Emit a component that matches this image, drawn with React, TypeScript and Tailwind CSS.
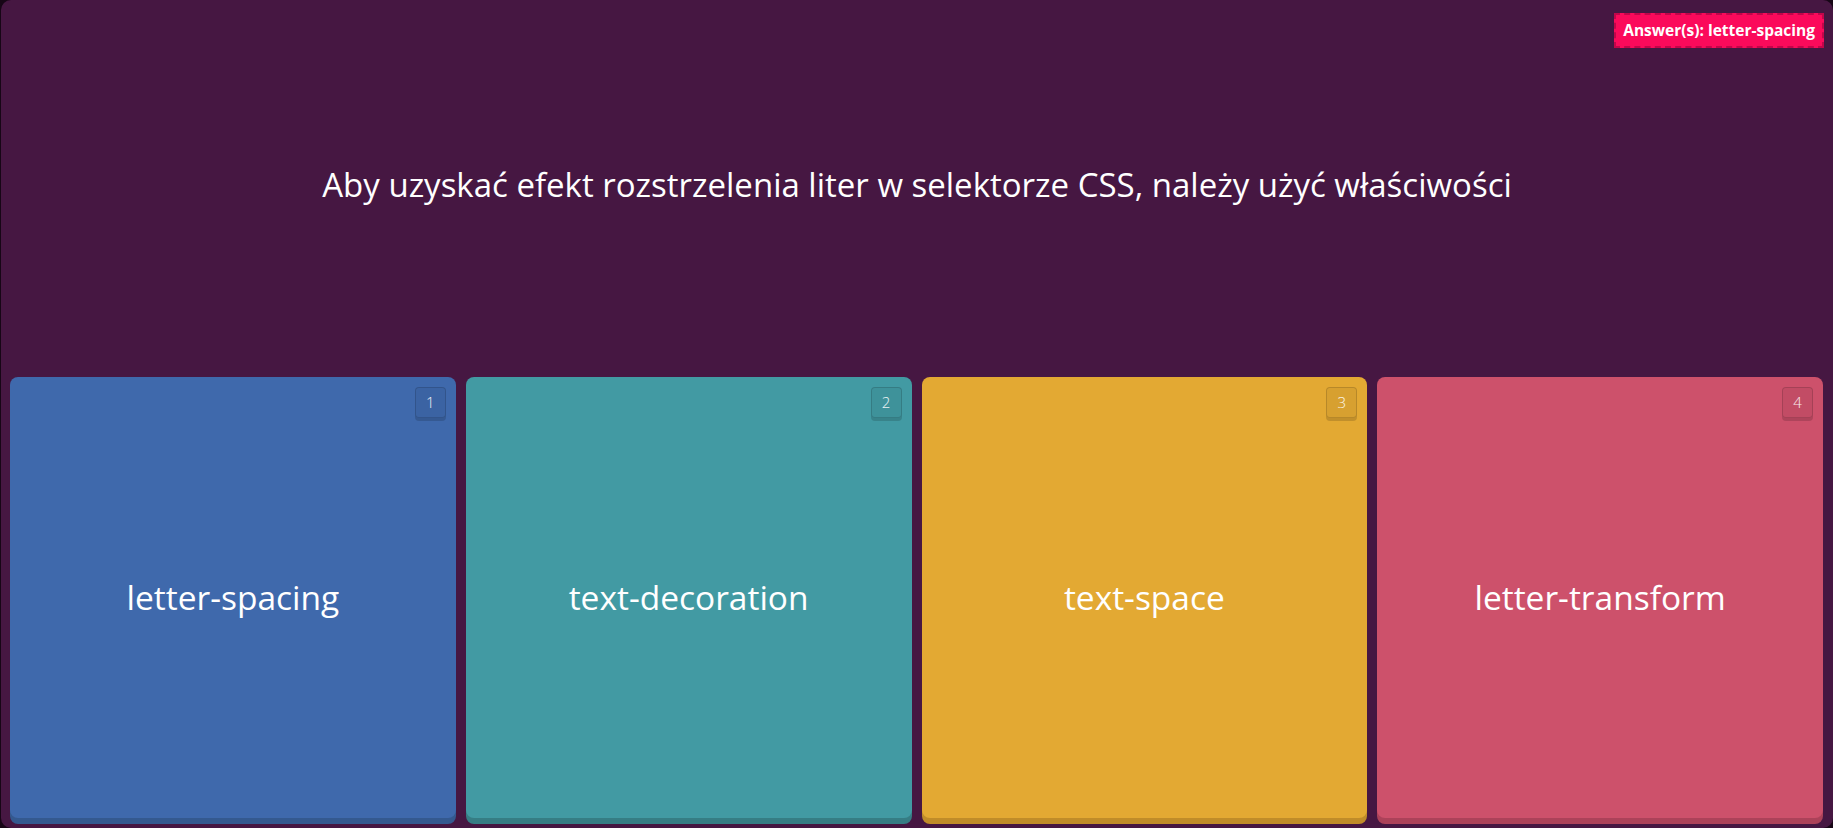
import React from "react";

const cards = [
  { n: 1, text: "letter-spacing", cls: "bg-[#3f69ac] shadow-[0_6px_0_#34598f]" },
  { n: 2, text: "text-decoration", cls: "bg-[#429aa3] shadow-[0_6px_0_#367d84]" },
  { n: 3, text: "text-space", cls: "bg-[#e3a933] shadow-[0_6px_0_#c08c29]" },
  { n: 4, text: "letter-transform", cls: "bg-[#cd516b] shadow-[0_6px_0_#ac4259]" },
];

export default function App() {
  return (
    <div
      className="h-[828px] w-full bg-[#170616] pl-[1px]"
      style={{ fontFamily: '"Open Sans", "Noto Sans", sans-serif' }}
    >
      <div className="relative flex h-full flex-col rounded-[10px] bg-[#461742]">
        <div className="absolute right-[9px] top-[13px] flex h-[35px] items-center border-2 border-dashed border-[#c2064a] bg-[#fb0a5b] px-[7px] text-[15.5px] font-bold text-white">
          Answer(s): letter-spacing
        </div>
        <div className="flex flex-1 items-center justify-center pb-[8px]">
          <div className="text-[33px] font-medium text-white">
            Aby uzyskać efekt rozstrzelenia liter w selektorze CSS, należy użyć właściwości
          </div>
        </div>
        <div className="grid h-[451px] grid-cols-4 gap-[10px] pb-[10px] pl-[9px] pr-[10px]">
          {cards.map((c) => (
            <div
              key={c.n}
              className={`relative flex items-center justify-center rounded-[8px] ${c.cls}`}
            >
              <div className="absolute right-[10px] top-[10px] flex h-[31px] w-[31px] items-center justify-center rounded-[4px] border border-black/15 bg-black/5 text-[15px] font-light text-white/90 shadow-[0_3px_0_rgba(0,0,0,0.15)]">
                {c.n}
              </div>
              <div className="text-[33.5px] font-medium text-white">{c.text}</div>
            </div>
          ))}
        </div>
      </div>
    </div>
  );
}
